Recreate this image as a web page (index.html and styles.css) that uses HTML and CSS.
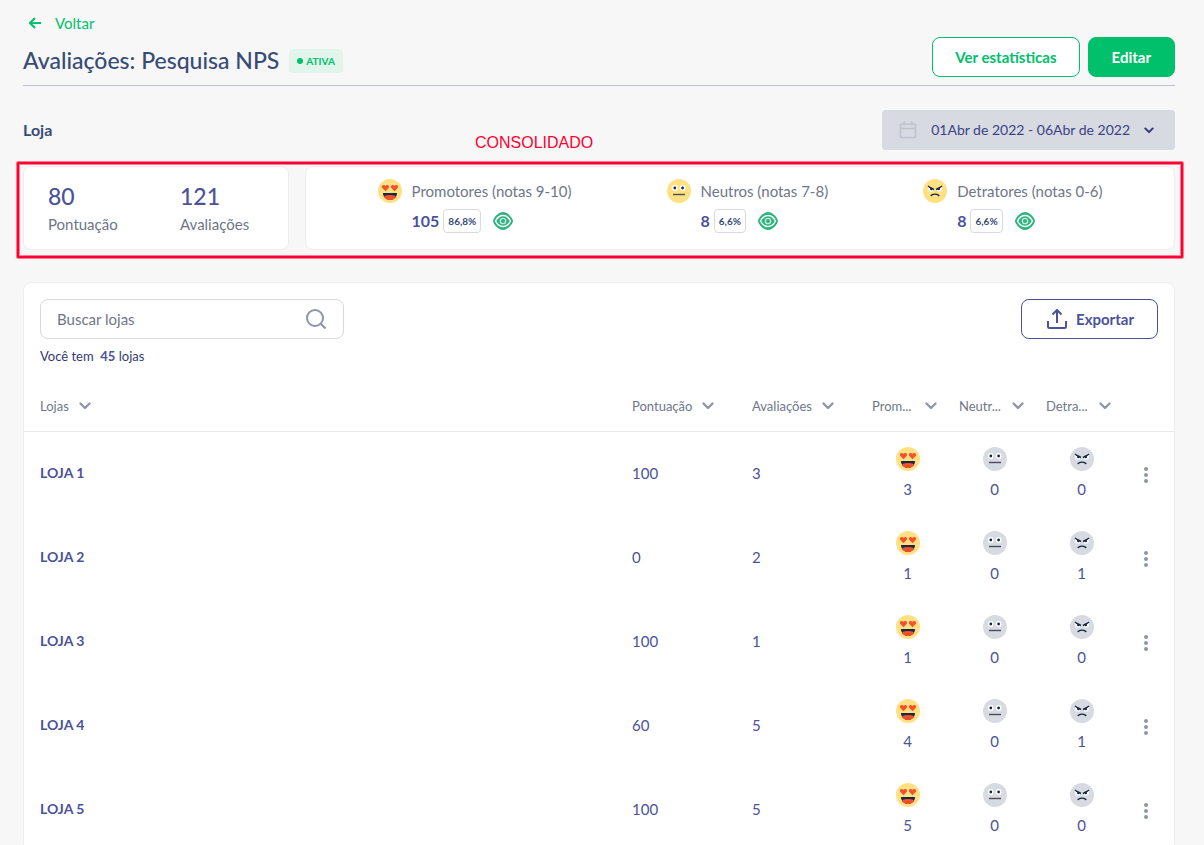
FILE: index.html
```html
<!DOCTYPE html>
<html lang="pt-BR">
<head>
    <meta charset="UTF-8">
    <meta name="viewport" content="width=device-width, initial-scale=1.0">
    <title>Avaliações: Pesquisa NPS</title>
    <link rel="stylesheet" href="styles.css">
</head>
<body>
    <!-- Shared icons -->
    <svg class="sprite" aria-hidden="true">
        <symbol id="face-love" viewBox="0 0 24 24">
            <circle cx="12" cy="12" r="12" fill="#ffe083"/>
            <path d="M7.500 12.200 4.600 9.300C3.300 7.900 4.200 6 5.700 6c.8 0 1.400.4 1.800 1.100C7.900 6.400 8.500 6 9.300 6c1.500 0 2.400 1.900 1.100 3.300z" fill="#f9502b"/>
            <path d="M16.500 12.200 13.600 9.300C12.300 7.900 13.200 6 14.700 6c.8 0 1.400.4 1.800 1.100.4-.7 1-1.100 1.800-1.100 1.500 0 2.400 1.900 1.100 3.300z" fill="#f9502b"/>
            <path d="M5 14h14c0 4-3 7-7 7s-7-3-7-7z" fill="#172744"/>
            <path d="M6 17q6-2 12 0c-1 2.500-3.200 4-6 4s-5-1.500-6-4z" fill="#f9502b"/>
        </symbol>
        <symbol id="face-neutral" viewBox="0 0 24 24">
            <circle cx="12" cy="12" r="12" fill="currentColor"/>
            <circle cx="7.700" cy="9" r="2.900" fill="#fff"/>
            <circle cx="15.700" cy="9" r="2.900" fill="#fff"/>
            <circle cx="7.800" cy="9" r="1.400" fill="#172744"/>
            <circle cx="15.600" cy="9" r="1.400" fill="#172744"/>
            <path d="M6 15.500h12" stroke="#4a4d58" stroke-width="1.400"/>
        </symbol>
        <symbol id="face-angry" viewBox="0 0 24 24">
            <circle cx="12" cy="12" r="12" fill="currentColor"/>
            <path d="M5 8l5.500 2.500c0 3-4.800 3-5.500 0zM19 8l-5.500 2.500c0 3 4.800 3 5.500 0z" fill="#fff"/>
            <path d="M5 7l2 1.500 4 2M19 7l-2 1.500-4 2" fill="none" stroke="#172744" stroke-width="1.400"/>
            <circle cx="8.300" cy="10" r="1.300" fill="#172744"/>
            <circle cx="15.700" cy="10" r="1.300" fill="#172744"/>
            <path d="M8 17.200c.4-2.800 7.600-2.800 8 0" fill="none" stroke="#172744" stroke-width="1.400"/>
        </symbol>
        <symbol id="eye" viewBox="0 0 20 18">
            <path d="M0 9C0 6.500 5 0 10 0s10 6.500 10 9-5 9-10 9S0 11.500 0 9z" fill="#2fb380"/>
            <path d="M2.500 9c1.700-3.400 4.300-5.500 7.500-5.500s5.800 2.100 7.500 5.500c-1.700 3.400-4.300 5.500-7.500 5.500S4.200 12.400 2.500 9z" fill="none" stroke="#fff" stroke-width="1.400"/>
            <circle cx="10" cy="9" r="2.700" fill="none" stroke="#c4e9da" stroke-width="1.300"/>
        </symbol>
        <symbol id="chevron" viewBox="0 0 12 8">
            <path d="M1.500 1.500 6 6l4.500-4.500" fill="none" stroke="currentColor" stroke-width="2.300" stroke-linecap="round" stroke-linejoin="round"/>
        </symbol>
        <symbol id="dots" viewBox="0 0 4 16">
            <circle cx="2" cy="2" r="2" fill="currentColor"/>
            <circle cx="2" cy="8" r="2" fill="currentColor"/>
            <circle cx="2" cy="14" r="2" fill="currentColor"/>
        </symbol>
    </svg>

    <main class="page">
        <a class="back" href="#">
            <svg width="12" height="12" viewBox="0 0 12 12"><path d="M6 1 1 6l5 5M1 6h11" fill="none" stroke="currentColor" stroke-width="2"/></svg>
            Voltar
        </a>
        <header class="header">
            <h1>Avaliações: Pesquisa NPS</h1>
            <span class="status">ATIVA</span>
            <div class="actions">
                <button class="btn btn-outline">Ver estatísticas</button>
                <button class="btn btn-primary">Editar</button>
            </div>
        </header>

        <div class="filter">
            <h2>Loja</h2>
            <button class="date-range">
                <svg width="18" height="18" viewBox="0 0 18 18"><path d="M1.500 3h15v13.500h-15zM1.500 7.500h15M5 0v4.500M13 0v4.500" fill="none" stroke="#bfc3ce" stroke-width="1.500" stroke-linejoin="round"/></svg>
                <span>01Abr de 2022 - 06Abr de 2022</span>
                <svg class="caret" width="10" height="7"><use href="#chevron"/></svg>
            </button>
        </div>

        <section class="summary">
            <span class="summary-note">CONSOLIDADO</span>
            <div class="card totals">
                <div class="total"><strong>80</strong><span>Pontuação</span></div>
                <div class="total"><strong>121</strong><span>Avaliações</span></div>
            </div>
            <div class="card groups">
                <div class="group">
                    <svg class="face yellow"><use href="#face-love"/></svg>
                    <span class="group-name">Promotores (notas 9-10)</span>
                    <div class="group-data">
                        <strong>105</strong><span class="percent">86,8%</span>
                        <button class="icon-btn" aria-label="Ver promotores"><svg width="20" height="18"><use href="#eye"/></svg></button>
                    </div>
                </div>
                <div class="group">
                    <svg class="face yellow"><use href="#face-neutral"/></svg>
                    <span class="group-name">Neutros (notas 7-8)</span>
                    <div class="group-data">
                        <strong>8</strong><span class="percent">6,6%</span>
                        <button class="icon-btn" aria-label="Ver neutros"><svg width="20" height="18"><use href="#eye"/></svg></button>
                    </div>
                </div>
                <div class="group">
                    <svg class="face yellow"><use href="#face-angry"/></svg>
                    <span class="group-name">Detratores (notas 0-6)</span>
                    <div class="group-data">
                        <strong>8</strong><span class="percent">6,6%</span>
                        <button class="icon-btn" aria-label="Ver detratores"><svg width="20" height="18"><use href="#eye"/></svg></button>
                    </div>
                </div>
            </div>
        </section>

        <section class="card stores">
            <div class="toolbar">
                <label class="search">
                    <input type="text" placeholder="Buscar lojas" aria-label="Buscar lojas">
                    <svg width="20" height="20" viewBox="0 0 20 20"><circle cx="9" cy="9" r="8" fill="none" stroke="currentColor" stroke-width="2"/><path d="M14.800 14.800 19.500 19.500" stroke="currentColor" stroke-width="2"/></svg>
                </label>
                <button class="btn btn-export">
                    <svg width="20" height="20" viewBox="0 0 20 20"><path d="M1 12v5.500Q1 19 2.500 19h15q1.500 0 1.500-1.500V12M10 14V1.500M5.500 5.500 10 1l4.500 4.500" fill="none" stroke="currentColor" stroke-width="2"/></svg>
                    Exportar
                </button>
            </div>
            <p class="count">Você tem &nbsp;<strong>45</strong> lojas</p>

            <table>
                <thead>
                    <tr>
                        <th><button class="sort"><span>Lojas</span><svg width="12" height="8"><use href="#chevron"/></svg></button></th>
                        <th class="col-number"><button class="sort"><span>Pontuação</span><svg width="12" height="8"><use href="#chevron"/></svg></button></th>
                        <th class="col-number"><button class="sort"><span>Avaliações</span><svg width="12" height="8"><use href="#chevron"/></svg></button></th>
                        <th class="col-face"><button class="sort"><span class="cut">Prom...</span><svg width="12" height="8"><use href="#chevron"/></svg></button></th>
                        <th class="col-face"><button class="sort"><span class="cut">Neutr...</span><svg width="12" height="8"><use href="#chevron"/></svg></button></th>
                        <th class="col-face"><button class="sort"><span class="cut">Detra...</span><svg width="12" height="8"><use href="#chevron"/></svg></button></th>
                        <th class="col-menu"></th>
                    </tr>
                </thead>
                <tbody>
                    <tr>
                        <td class="name">LOJA 1</td>
                        <td>100</td>
                        <td>3</td>
                        <td class="vote"><svg class="face"><use href="#face-love"/></svg>3</td>
                        <td class="vote"><svg class="face"><use href="#face-neutral"/></svg>0</td>
                        <td class="vote"><svg class="face"><use href="#face-angry"/></svg>0</td>
                        <td class="menu"><button class="icon-btn" aria-label="Opções da LOJA 1"><svg width="4" height="16"><use href="#dots"/></svg></button></td>
                    </tr>
                    <tr>
                        <td class="name">LOJA 2</td>
                        <td>0</td>
                        <td>2</td>
                        <td class="vote"><svg class="face"><use href="#face-love"/></svg>1</td>
                        <td class="vote"><svg class="face"><use href="#face-neutral"/></svg>0</td>
                        <td class="vote"><svg class="face"><use href="#face-angry"/></svg>1</td>
                        <td class="menu"><button class="icon-btn" aria-label="Opções da LOJA 2"><svg width="4" height="16"><use href="#dots"/></svg></button></td>
                    </tr>
                    <tr>
                        <td class="name">LOJA 3</td>
                        <td>100</td>
                        <td>1</td>
                        <td class="vote"><svg class="face"><use href="#face-love"/></svg>1</td>
                        <td class="vote"><svg class="face"><use href="#face-neutral"/></svg>0</td>
                        <td class="vote"><svg class="face"><use href="#face-angry"/></svg>0</td>
                        <td class="menu"><button class="icon-btn" aria-label="Opções da LOJA 3"><svg width="4" height="16"><use href="#dots"/></svg></button></td>
                    </tr>
                    <tr>
                        <td class="name">LOJA 4</td>
                        <td>60</td>
                        <td>5</td>
                        <td class="vote"><svg class="face"><use href="#face-love"/></svg>4</td>
                        <td class="vote"><svg class="face"><use href="#face-neutral"/></svg>0</td>
                        <td class="vote"><svg class="face"><use href="#face-angry"/></svg>1</td>
                        <td class="menu"><button class="icon-btn" aria-label="Opções da LOJA 4"><svg width="4" height="16"><use href="#dots"/></svg></button></td>
                    </tr>
                    <tr>
                        <td class="name">LOJA 5</td>
                        <td>100</td>
                        <td>5</td>
                        <td class="vote"><svg class="face"><use href="#face-love"/></svg>5</td>
                        <td class="vote"><svg class="face"><use href="#face-neutral"/></svg>0</td>
                        <td class="vote"><svg class="face"><use href="#face-angry"/></svg>0</td>
                        <td class="menu"><button class="icon-btn" aria-label="Opções da LOJA 5"><svg width="4" height="16"><use href="#dots"/></svg></button></td>
                    </tr>
                </tbody>
            </table>
        </section>
    </main>
</body>
</html>
```

FILE: styles.css
```css
* {
    box-sizing: border-box;
}
body {
    margin: 0;
    background: #f7f7f7;
    color: #4b5299;
    font-family: Lato, "Open Sans", sans-serif;
    font-size: 15px;
    line-height: 20px;
}
button,
input {
    font: inherit;
    color: inherit;
}
button {
    cursor: pointer;
}
.sprite {
    display: none;
}
.page {
    padding: 13px 29px 0 23px;
}
.back {
    display: inline-flex;
    align-items: center;
    gap: 14px;
    padding-left: 6px;
    color: #00c06b;
    text-decoration: none;
}

/* Header */
.header {
    display: flex;
    align-items: center;
    padding: 4px 0 8px;
    border-bottom: 1px solid #bcc0cd;
}
h1 {
    margin: 0;
    padding-top: 6px;
    color: #374b77;
    font-size: 23px;
    font-weight: 500;
    line-height: 28px;
}
.status {
    display: flex;
    align-items: center;
    gap: 3px;
    height: 24px;
    margin: 8px 0 0 10px;
    padding: 0 8px;
    border-radius: 4px;
    background: #e2f5eb;
    color: #00c06b;
    font-size: 10px;
    font-weight: 700;
}
.status::before {
    content: "";
    width: 6px;
    height: 6px;
    border-radius: 50%;
    background: #00c06b;
}
.actions {
    display: flex;
    gap: 8px;
    margin-left: auto;
}
.btn {
    height: 40px;
    padding: 0 23px;
    border: 1px solid #00c06b;
    border-radius: 8px;
    background: #fff;
    font-weight: 700;
}
.btn-outline {
    padding: 0 22px;
    color: #00c06b;
}
.btn-primary {
    background: #00c06b;
    color: #fff;
}

/* Period filter */
.filter {
    display: flex;
    align-items: center;
    justify-content: space-between;
    padding: 24px 0 16px;
}
h2 {
    margin: 0;
    color: #374b77;
    font-size: 16px;
    line-height: 20px;
}
.date-range {
    display: flex;
    align-items: center;
    gap: 14px;
    height: 40px;
    padding: 0 21px 0 17px;
    border: 0;
    border-radius: 4px;
    background: #d7dae1;
    color: #3c4285;
    font-size: 14px;
}
.caret {
    color: #2e3775;
}

/* Summary */
.card {
    border: 1px solid #eeeeef;
    border-radius: 8px;
    background: #fff;
}
.summary {
    position: relative;
    display: flex;
    gap: 16px;
}
/* Highlight frame drawn over the summary */
.summary::after {
    content: "";
    position: absolute;
    inset: -4px -8px -8px -6px;
    border: 2px solid #ff0032;
    border-radius: 1px;
    box-shadow: 0 0 0 1px rgba(255, 0, 50, 0.5), inset 0 0 0 1px rgba(255, 0, 50, 0.5);
    pointer-events: none;
}
.summary-note {
    position: absolute;
    top: -33px;
    left: 452px;
    color: #ff0032;
    font-family: "Liberation Sans", Arial, sans-serif;
    font-size: 16px;
}
.totals {
    display: grid;
    grid-template-columns: 132px 132px;
    align-content: center;
    height: 84px;
}
.total {
    display: flex;
    flex-direction: column;
    gap: 4px;
    padding-left: 24px;
}
.total strong {
    font-size: 23px;
    font-weight: 500;
    line-height: 28px;
}
.total span,
.group-name {
    color: #6f7689;
}
.groups {
    flex: 1;
    display: flex;
    align-items: center;
    justify-content: space-around;
    padding: 0 24px 4px;
}
.group {
    display: grid;
    grid-template-columns: 24px auto;
    align-items: center;
    gap: 6px 10px;
}
.group-data {
    grid-column: 2;
    display: flex;
    align-items: center;
    gap: 4px;
}
.group-data strong {
    font-size: 16px;
}
.percent {
    padding: 1px 4px;
    border: 1px solid #d7dae1;
    border-radius: 4px;
    color: #374b77;
    font-size: 10px;
    font-weight: 700;
}
.group-data .icon-btn {
    margin-left: 8px;
}
.icon-btn {
    padding: 0;
    border: 0;
    background: none;
    line-height: 0;
}
.face {
    width: 24px;
    height: 24px;
    color: #d7dae1;
}
.face.yellow {
    color: #ffe083;
}

/* Stores */
.stores {
    margin-top: 32px;
    padding-top: 16px;
}
.toolbar {
    display: flex;
    justify-content: space-between;
    padding: 0 16px;
}
.search {
    display: flex;
    align-items: center;
    width: 304px;
    height: 40px;
    padding: 0 17px 0 16px;
    border: 1px solid #d7d9e2;
    border-radius: 8px;
    color: #8e95a9;
}
.search input {
    flex: 1;
    min-width: 0;
    padding: 0;
    border: 0;
    outline: 0;
    background: none;
}
.search input::placeholder {
    color: #6f7689;
    opacity: 1;
}
.btn-export {
    display: flex;
    align-items: center;
    gap: 9px;
    padding: 0 23px 0 25px;
    border-color: #4b5299;
    color: #4b5299;
}
.count {
    margin: 7px 16px 15px;
    color: #34396f;
    font-size: 13px;
}
.count strong {
    color: #4b5299;
}
table {
    width: 100%;
    border-collapse: collapse;
    table-layout: fixed;
}
th,
td {
    padding: 0 0 0 16px;
    text-align: left;
}
th {
    height: 50px;
    border-bottom: 1px solid #e9eaec;
    font-weight: 400;
}
td {
    height: 84px;
}
.col-number {
    width: 120px;
}
.col-face {
    width: 87px;
}
.col-menu {
    width: 57px;
}
.sort {
    display: flex;
    align-items: center;
    gap: 10px;
    padding: 0;
    border: 0;
    background: none;
    color: #8e95a9;
    font-size: 13px;
}
.sort span {
    color: #6f7689;
}
.sort .cut {
    width: 43px;
    text-align: left;
}
.name {
    font-size: 14px;
    font-weight: 700;
}
.vote {
    padding-right: 16px;
    text-align: center;
}
.vote .face {
    display: block;
    margin: 0 auto 8px;
}
td.vote {
    padding-right: 0;
}
td.menu {
    padding: 0;
    text-align: center;
    color: #8e95a9;
}
.menu .icon-btn {
    vertical-align: middle;
}
```
